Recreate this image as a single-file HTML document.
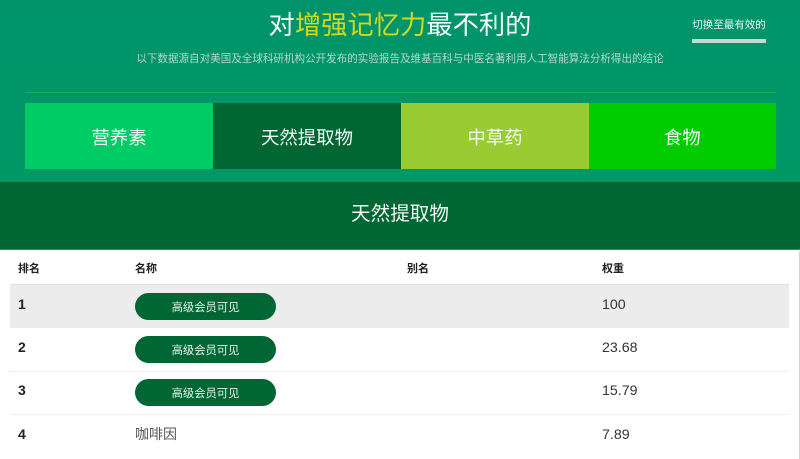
<!DOCTYPE html>
<html lang="zh">
<head>
<meta charset="utf-8">
<title>对增强记忆力最不利的</title>
<style>
html,body{margin:0;padding:0;width:800px;height:459px;overflow:hidden;background:#fff;}
body{position:relative;font-family:"Liberation Sans","Noto Sans CJK SC",sans-serif;}
div{position:absolute;white-space:nowrap;}
.c{text-align:center;}
#hero{left:0;top:0;width:800px;height:182px;background:linear-gradient(#00936a,#009966);}
.tab{top:103px;height:66px;line-height:70px;width:188px;color:#f2fbf5;font-size:18.4px;text-align:center;}
.hd{top:262px;font-size:11px;font-weight:700;color:#222;line-height:14px;}
.n{left:18px;font-size:14px;font-weight:700;color:#222;line-height:20px;}
.v{left:602px;font-size:14.2px;color:#333;line-height:20px;}
.pill{left:135px;width:141px;height:27px;line-height:30px;border-radius:14px;background:#006633;color:#e6f2ec;font-size:11.3px;text-align:center;}
.ln{left:10px;width:779px;height:1px;background:#eceeef;}
</style>
</head>
<body>
<div id="hero"></div>
<div class="c" style="left:0;top:7px;width:800px;font-size:26.3px;line-height:36px;color:#f4fbf8;">对<span style="color:#d4d91e;">增强记忆力</span>最不利的</div>
<div style="left:692px;top:18px;width:74px;font-size:10.5px;line-height:15px;color:#eef6f2;text-align:center;">切换至最有效的</div>
<div style="left:692px;top:39px;width:74px;height:4px;background:#c9d8d2;"></div>
<div class="c" style="left:0;top:51px;width:800px;font-size:10.55px;line-height:16px;color:#b4d9cb;">以下数据源自对美国及全球科研机构公开发布的实验报告及维基百科与中医名著利用人工智能算法分析得出的结论</div>
<div style="left:25px;top:92px;width:751px;height:1px;background:#1faa5c;"></div>
<div class="tab" style="left:25px;background:#00cc66;">营养素</div>
<div class="tab" style="left:213px;background:#006633;">天然提取物</div>
<div class="tab" style="left:401px;background:#99cc33;">中草药</div>
<div class="tab" style="left:588.5px;width:187.5px;background:#00cc00;">食物</div>
<div class="c" style="left:0;top:182px;width:800px;height:68px;line-height:64px;background:#006633;color:#f2fbf5;font-size:19.6px;border-bottom:1px solid #3d8763;box-sizing:border-box;">天然提取物</div>
<div style="left:798.5px;top:251px;width:1.5px;height:208px;background:#c6dcd8;"></div>
<div class="hd" style="left:18px;">排名</div>
<div class="hd" style="left:135px;">名称</div>
<div class="hd" style="left:407px;">别名</div>
<div class="hd" style="left:602px;">权重</div>
<div style="left:10px;top:284px;width:779px;height:44px;background:#ececec;border-top:1px solid #dfe1e3;box-sizing:border-box;"></div>
<div class="ln" style="top:371px;"></div>
<div class="ln" style="top:414px;"></div>
<div class="n" style="top:294px;">1</div>
<div class="n" style="top:337px;">2</div>
<div class="n" style="top:380px;">3</div>
<div class="n" style="top:424px;">4</div>
<div class="pill" style="top:293px;">高级会员可见</div>
<div class="pill" style="top:336px;">高级会员可见</div>
<div class="pill" style="top:379px;">高级会员可见</div>
<div style="left:135px;top:424px;font-size:14px;line-height:20px;color:#555;">咖啡因</div>
<div class="v" style="top:295px;">100</div>
<div class="v" style="top:338px;">23.68</div>
<div class="v" style="top:381px;">15.79</div>
<div class="v" style="top:425px;">7.89</div>
</body>
</html>
